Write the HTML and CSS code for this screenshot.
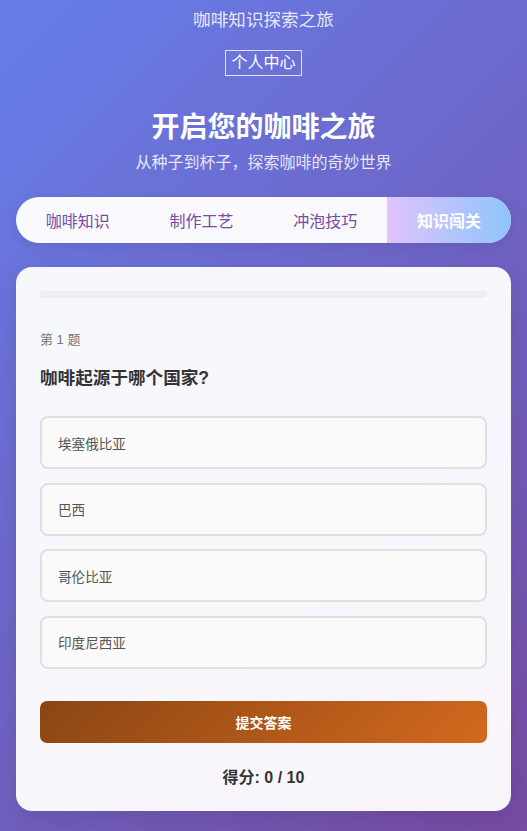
FILE: index.html
```html
<!DOCTYPE html>
<html lang="zh-CN">
<head>
  <meta charset="UTF-8">
  <meta name="viewport" content="width=device-width, initial-scale=1.0">
  <title>咖啡知识探索之旅</title>
  <link rel="stylesheet" href="styles.css">
</head>
<body>
  <header class="top">
    <p class="site-title">咖啡知识探索之旅</p>
    <button class="profile-btn">个人中心</button>
  </header>

  <section class="hero">
    <h1>开启您的咖啡之旅</h1>
    <p>从种子到杯子，探索咖啡的奇妙世界</p>
  </section>

  <nav class="tabs">
    <button class="tab">咖啡知识</button>
    <button class="tab">制作工艺</button>
    <button class="tab">冲泡技巧</button>
    <button class="tab active">知识闯关</button>
  </nav>

  <main class="quiz-card">
    <div class="progress"><div class="progress-fill" style="width: 0%"></div></div>
    <p class="q-num">第 1 题</p>
    <h2 class="question">咖啡起源于哪个国家?</h2>
    <div class="options">
      <div class="option">埃塞俄比亚</div>
      <div class="option">巴西</div>
      <div class="option">哥伦比亚</div>
      <div class="option">印度尼西亚</div>
    </div>
    <button class="submit-btn">提交答案</button>
    <p class="score">得分: 0 / 10</p>
  </main>
</body>
</html>
```

FILE: styles.css
```css
* {
  box-sizing: border-box;
}
html {
  min-height: 100%;
}
body {
  margin: 0;
  padding: 8px 16px 20px;
  font-family: "Liberation Sans", "Noto Sans CJK SC", sans-serif;
  background: linear-gradient(135deg, #667eea 0%, #764ba2 100%);
  min-height: 100vh;
  color: #333;
}
.top {
  text-align: center;
}
.site-title {
  margin: 0;
  font-size: 17.6px;
  line-height: 24px;
  color: rgba(255, 255, 255, 0.85);
}
.profile-btn {
  margin-top: 18px;
  height: 26px;
  padding: 0 5px;
  border: 1px solid rgba(255, 255, 255, 0.8);
  background: transparent;
  color: #fff;
  font-family: inherit;
  font-size: 16px;
  line-height: 24px;
}
.hero {
  text-align: center;
  color: #fff;
  margin-top: 34px;
}
.hero h1 {
  margin: 0;
  font-size: 28px;
  line-height: 36px;
  font-weight: bold;
}
.hero p {
  margin: 6px 0 0;
  font-size: 16px;
  line-height: 22px;
  color: rgba(255, 255, 255, 0.85);
}
.tabs {
  display: flex;
  margin-top: 23px;
  height: 46px;
  border-radius: 23px;
  overflow: hidden;
  background: rgba(255, 255, 255, 0.96);
  box-shadow: 0 4px 12px rgba(0, 0, 0, 0.08);
}
.tab {
  flex: 1;
  border: none;
  background: transparent;
  font-family: inherit;
  font-size: 16px;
  color: #764ba2;
  cursor: pointer;
}
.tab.active {
  background: linear-gradient(90deg, #e0c3fc 0%, #8ec5fc 100%);
  color: #fff;
  font-weight: bold;
}
.quiz-card {
  margin-top: 24px;
  padding: 24px 24px 21px;
  border-radius: 16px;
  background: rgba(255, 255, 255, 0.95);
  box-shadow: 0 8px 24px rgba(0, 0, 0, 0.1);
}
.progress {
  height: 7px;
  border-radius: 4px;
  background: #eee;
  overflow: hidden;
}
.progress-fill {
  height: 100%;
  background: linear-gradient(90deg, #8B4513, #D2691E);
}
.q-num {
  margin: 32px 0 0;
  font-size: 13px;
  line-height: 20px;
  color: #777;
}
.question {
  margin: 15px 0 0;
  font-size: 17.6px;
  line-height: 26px;
  font-weight: bold;
  color: #333;
}
.options {
  display: flex;
  flex-direction: column;
  gap: 13.6px;
  margin-top: 25px;
}
.option {
  height: 53px;
  display: flex;
  align-items: center;
  padding: 0 16px;
  border: 2px solid #e0e0e0;
  border-radius: 8px;
  background: #fafafa;
  font-size: 13.6px;
  color: #555;
  cursor: pointer;
}
.submit-btn {
  display: block;
  width: 100%;
  height: 42px;
  margin-top: 32px;
  border: none;
  border-radius: 7px;
  background: linear-gradient(135deg, #8B4513 0%, #D2691E 100%);
  color: #fff;
  font-family: inherit;
  font-size: 14px;
  font-weight: bold;
  cursor: pointer;
}
.score {
  margin: 23px 0 0;
  text-align: center;
  font-size: 16px;
  line-height: 24px;
  font-weight: bold;
  color: #333;
}
```
